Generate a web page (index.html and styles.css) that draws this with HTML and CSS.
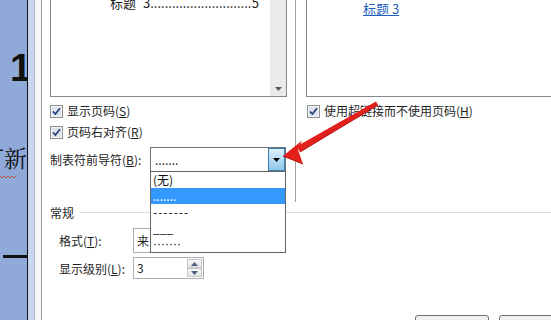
FILE: index.html
```html
<!DOCTYPE html>
<html lang="zh-CN">
<head>
<meta charset="utf-8">
<title>目录</title>
<link rel="stylesheet" href="styles.css">
</head>
<body>
<div class="screen">
  <div class="doc">
    <div class="doc-one">1</div>
    <div class="doc-word"><span>订新</span></div>
    <svg class="doc-wave" width="16" height="4" viewBox="0 0 16 4"><path d="M0 1 L2 3 L4 1 L6 3 L8 1 L10 3 L12 1 L14 3 L16 1" fill="none" stroke="#c0504d" stroke-width="1"/></svg>
    <div class="doc-rule"></div>
  </div>
  <div class="frame-a"></div>
  <div class="frame-b"></div>
  <div class="dialog">
    <div class="top">
      <div class="group-left">
        <div class="preview preview-left">
          <div class="preview-body">
            <div class="toc-line"><span>标题</span><span class="num">3</span><span class="leader">..............................................................</span><span>5</span></div>
          </div>
          <div class="scrollbar"><svg width="7" height="4" viewBox="0 0 7 4"><path d="M0 0 H7 L3.5 4 Z" fill="#5a5a5a"/></svg></div>
        </div>
        <label class="check-row row-1">
          <svg class="cb" width="13" height="13" viewBox="0 0 13 13"><rect x="0.5" y="0.5" width="12" height="12" fill="#f4f4f4" stroke="#8e8f8f"/><rect x="2" y="2" width="9" height="9" fill="#dde3ea"/><path d="M3 6.5 L5.4 9 L10 3.2" fill="none" stroke="#243c7c" stroke-width="1.7"/></svg>
          <span>显示页码(<u>S</u>)</span>
        </label>
        <label class="check-row row-2">
          <svg class="cb" width="13" height="13" viewBox="0 0 13 13"><rect x="0.5" y="0.5" width="12" height="12" fill="#f4f4f4" stroke="#8e8f8f"/><rect x="2" y="2" width="9" height="9" fill="#dde3ea"/><path d="M3 6.5 L5.4 9 L10 3.2" fill="none" stroke="#243c7c" stroke-width="1.7"/></svg>
          <span>页码右对齐(<u>R</u>)</span>
        </label>
        <div class="field-row">
          <span class="field-label">制表符前导符(<u>B</u>):</span>
          <div class="select">
            <span class="select-value">.......</span>
            <span class="select-btn"><svg width="7" height="4" viewBox="0 0 7 4"><path d="M0 0 H7 L3.5 4 Z" fill="#000"/></svg></span>
            <ul class="dropdown">
              <li>(无)</li>
              <li class="selected">.......</li>
              <li class="dashes">-------</li>
              <li>___</li>
              <li class="middots">·······</li>
            </ul>
          </div>
        </div>
      </div>
      <div class="group-right">
        <div class="preview preview-right">
          <a class="toc-link">标题 3</a>
        </div>
        <label class="check-row row-1 row-right">
          <svg class="cb" width="13" height="13" viewBox="0 0 13 13"><rect x="0.5" y="0.5" width="12" height="12" fill="#f4f4f4" stroke="#8e8f8f"/><rect x="2" y="2" width="9" height="9" fill="#dde3ea"/><path d="M3 6.5 L5.4 9 L10 3.2" fill="none" stroke="#243c7c" stroke-width="1.7"/></svg>
          <span>使用超链接而不使用页码(<u>H</u>)</span>
        </label>
      </div>
    </div>
    <div class="section-head"><span>常规</span><span class="section-line"></span></div>
    <div class="form-row row-format">
      <span class="form-label">格式(<u>T</u>):</span>
      <div class="combo">来自模板</div>
    </div>
    <div class="form-row row-level">
      <span class="form-label">显示级别(<u>L</u>):</span>
      <div class="spin">
        <span class="spin-value">3</span>
        <span class="spin-btns">
          <span class="spin-btn"><svg width="7" height="4" viewBox="0 0 7 4"><path d="M0 4 H7 L3.5 0 Z" fill="#4b5f86"/></svg></span>
          <span class="spin-btn"><svg width="7" height="4" viewBox="0 0 7 4"><path d="M0 0 H7 L3.5 4 Z" fill="#4b5f86"/></svg></span>
        </span>
      </div>
    </div>
    <div class="buttons">
      <button class="btn">确定</button>
      <button class="btn">取消</button>
    </div>
  </div>
  <svg class="arrow" width="551" height="320" viewBox="0 0 551 320">
    <polygon points="376,101.5 378,105 300,152 296.5,146.5" fill="#e3201b"/>
    <polygon points="283,156 302,140.5 298,150 303,164" fill="#e3201b"/>
    <path d="M378 105 L300 152 M283 156 L303 164" stroke="#b3120f" stroke-width="1" fill="none"/>
  </svg>
</div>
</body>
</html>
```

FILE: styles.css
```css
* { box-sizing: border-box; }

html, body {
  margin: 0;
  padding: 0;
}

body {
  width: 551px;
  height: 320px;
  overflow: hidden;
  background: #fff;
  font-family: "Noto Sans CJK SC", "Noto Sans", sans-serif;
  font-size: 12px;
  color: #1e1e1e;
}

.screen {
  position: relative;
  display: flex;
  width: 551px;
  height: 320px;
  overflow: hidden;
}

/* Word document strip */
.doc {
  flex: 0 0 28px;
  background: #8fa9d9;
  border-right: 1px solid #111;
  overflow: hidden;
  display: flex;
  flex-direction: column;
}

.doc > * { flex-shrink: 0; }

.doc-one {
  margin-top: 48px;
  height: 39px;
  line-height: 39px;
  padding-left: 10px;
  font-family: "Liberation Sans", Arial, sans-serif;
  font-weight: bold;
  font-size: 39px;
  color: #111;
}

.doc-word {
  margin-top: 59px;
  height: 23px;
  display: flex;
  justify-content: flex-end;
  white-space: nowrap;
  font-family: "Noto Serif CJK SC", "Noto Sans CJK SC", serif;
  font-size: 23px;
  line-height: 23px;
  color: #111;
}

.doc-wave {
  display: block;
  margin-top: 6px;
}

.doc-rule {
  margin-top: 76px;
  margin-left: 3px;
  height: 3px;
  background: #111;
}

/* window frame */
.frame-a {
  flex: 0 0 7px;
  background: #c9d8ee;
  border-right: 1px solid #a6b4c8;
}

.frame-b {
  flex: 0 0 7px;
  background: #f7f7f7;
  border-right: 1px solid #9b9b9b;
}

/* dialog */
.dialog {
  flex: 0 0 509px;
  display: flex;
  flex-direction: column;
  background: #fff;
}

.dialog > * { flex-shrink: 0; }

.top {
  display: flex;
  height: 202px;
}

.group-left {
  position: relative;
  flex: 0 0 254px;
  padding-left: 8px;
  border-right: 1px solid #a0a0a0;
}

.group-right {
  flex: 1 0 auto;
  padding-left: 10px;
}

.preview {
  height: 97px;
  border: 1px solid #828790;
  border-top: none;
}

.preview-left {
  width: 237px;
  display: flex;
}

.preview-body {
  flex: 1;
  min-width: 0;
  padding-left: 59px;
  padding-right: 11px;
}

.toc-line {
  display: flex;
  margin-top: -5px;
  font-size: 13px;
  line-height: 16px;
  white-space: nowrap;
  color: #222;
}

.toc-line .num {
  margin-left: 7px;
}

.leader {
  flex: 1;
  min-width: 0;
  overflow: hidden;
}

.scrollbar {
  flex: 0 0 16px;
  background: #ebebeb;
  display: flex;
  align-items: flex-end;
  justify-content: center;
  padding-bottom: 5px;
}

.scrollbar svg { display: block; }

.preview-right {
  width: 300px;
  border-right: none;
  padding-left: 56px;
}

.toc-link {
  display: inline-block;
  margin-top: -5px;
  font-size: 13px;
  line-height: 16px;
  color: #1f5fbf;
  text-decoration: underline;
  white-space: pre;
}

.check-row {
  display: flex;
  align-items: center;
  gap: 4px;
  height: 16px;
  line-height: 16px;
  white-space: nowrap;
}

.cb { display: block; flex: 0 0 13px; }

.row-1 { margin-top: 6px; }
.row-2 { margin-top: 5px; }
.row-right { margin-left: 1px; }

.field-row {
  display: flex;
  align-items: center;
  margin-top: 7px;
  height: 25px;
}

.field-label {
  width: 100px;
  white-space: nowrap;
}

.select {
  position: relative;
  display: flex;
  align-items: center;
  width: 136px;
  height: 25px;
  border: 1px solid #6f7479;
  background: #fff;
}

.select-value {
  flex: 1;
  padding-left: 4px;
  line-height: 16px;
}

.select-btn {
  align-self: stretch;
  width: 17px;
  display: flex;
  align-items: center;
  justify-content: center;
  border: 1px solid #3c7fb1;
  background: linear-gradient(#dff0fc, #b5dcf6 50%, #8ec6ec);
}

.select-btn svg { display: block; }

.dropdown {
  position: absolute;
  left: -1px;
  top: 23px;
  z-index: 5;
  width: 136px;
  height: 82px;
  margin: 0;
  padding: 0;
  list-style: none;
  border: 1px solid #646464;
  background: #fff;
}

.dropdown li {
  height: 16px;
  line-height: 16px;
  padding-left: 2px;
  white-space: nowrap;
  color: #111;
}

.dropdown li.selected {
  background: #3399ff;
  color: #fff;
}

.dropdown li.dashes {
  letter-spacing: 1px;
}

.dropdown li.middots {
  font-family: "Liberation Sans", Arial, sans-serif;
}

.section-head {
  display: flex;
  align-items: center;
  gap: 6px;
  height: 16px;
  margin-top: 3px;
  padding-left: 8px;
  line-height: 16px;
}

.section-line {
  flex: 1;
  height: 1px;
  margin-top: -1px;
  background: #d5dfe5;
}

.form-row {
  display: flex;
  align-items: center;
  padding-left: 17px;
}

.row-format { margin-top: 7px; }
.row-level { margin-top: 4px; }

.form-label {
  width: 74px;
  white-space: nowrap;
}

.combo {
  width: 152px;
  height: 25px;
  line-height: 23px;
  padding-left: 3px;
  border: 1px solid #abadb3;
  white-space: nowrap;
  overflow: hidden;
}

.spin {
  display: flex;
  width: 71px;
  height: 22px;
  border: 1px solid #abadb3;
}

.spin-value {
  flex: 1;
  padding-left: 3px;
  line-height: 20px;
}

.spin-btns {
  display: flex;
  flex-direction: column;
  width: 15px;
  margin: 1px 1px 1px 0;
}

.spin-btn {
  flex: 1;
  display: flex;
  align-items: center;
  justify-content: center;
  border: 1px solid #c4c7cc;
  background: linear-gradient(#f7f7f7, #e4e4e4);
}

.spin-btn svg { display: block; }

.buttons {
  display: flex;
  gap: 10px;
  margin-top: 36px;
  padding-left: 373px;
}

.btn {
  flex: 0 0 74px;
  height: 23px;
  border: 1px solid #707070;
  border-radius: 3px;
  background: linear-gradient(#f2f2f2, #ebebeb 50%, #dddddd 50%, #cfcfcf);
  font-family: inherit;
  font-size: 12px;
}

.arrow {
  position: absolute;
  left: 0;
  top: 0;
  pointer-events: none;
}
```
